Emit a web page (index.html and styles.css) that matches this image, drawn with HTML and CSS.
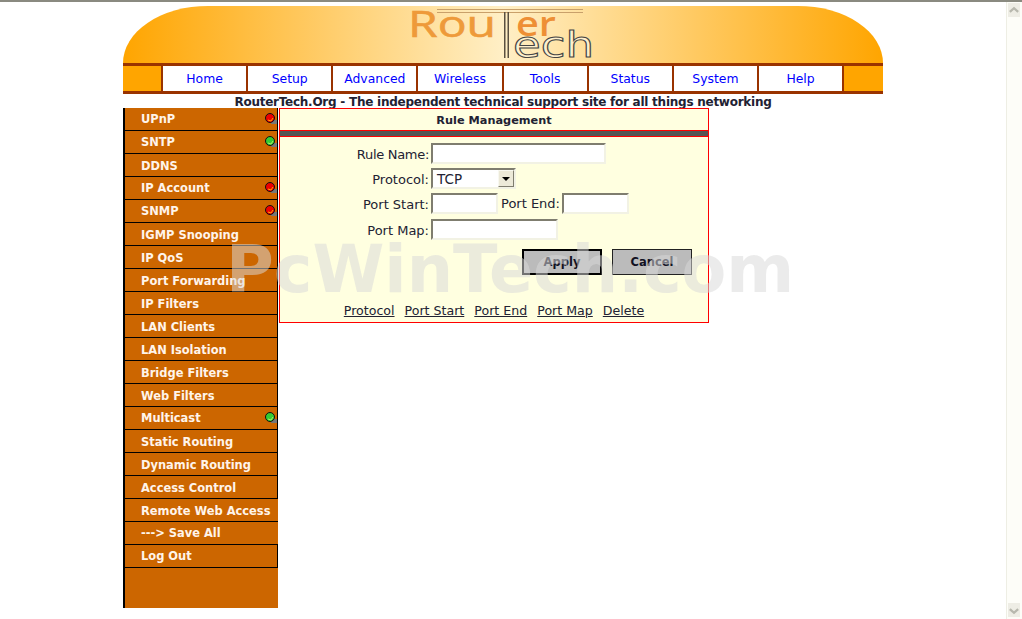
FILE: index.html
```html
<!DOCTYPE html>
<html>

<head>
    <meta name="viewport" content="width=device-width, initial-scale=1.0">
    <title>RouterTech</title>
    <link rel="stylesheet" href="styles.css">
</head>

<body>
    <div class="top-line"></div>
    <div class="page">
        <div class="content">
            <div class="banner">
                <svg class="logo" width="190" height="57" viewBox="0 0 190 57">
                    <rect x="30" y="3" width="146" height="1" fill="#c9a06a"></rect>
                    <rect x="30" y="6" width="146" height="1" fill="#c9a06a"></rect>
                    <rect x="97" y="6" width="1.5" height="46" fill="#5a5040"></rect>
                    <rect x="100.5" y="6" width="1.5" height="46" fill="#5a5040"></rect>
                    <text class="logo-rou" x="1" y="31" textLength="88" lengthAdjust="spacingAndGlyphs">Rou</text>
                    <text class="logo-er" x="109" y="30" textLength="40" lengthAdjust="spacingAndGlyphs">er</text>
                    <text class="logo-ech" x="106" y="51" textLength="81" lengthAdjust="spacingAndGlyphs">ech</text>
                </svg>
            </div>
            <div class="nav">
                <a class="nav-item" href="#">Home</a>
                <a class="nav-item" href="#">Setup</a>
                <a class="nav-item" href="#">Advanced</a>
                <a class="nav-item" href="#">Wireless</a>
                <a class="nav-item" href="#">Tools</a>
                <a class="nav-item" href="#">Status</a>
                <a class="nav-item" href="#">System</a>
                <a class="nav-item" href="#">Help</a>
                <div class="nav-end"></div>
            </div>
            <div class="tagline">RouterTech.Org - The independent technical support site for all things networking</div>
            <div class="columns">
                <div class="sidebar">
                    <a class="menu-item plain" href="#">UPnP
                        <svg class="led" width="12" height="12" viewBox="0 0 12 12"><rect x="6" y="7" width="6" height="4" fill="#777777"></rect><circle cx="5" cy="5" r="4.5" fill="#ee0000" stroke="#111111"></circle><path d="M3 7 L6 8 L8 5" stroke="#ffaa00" fill="none"></path></svg>
                    </a>
                    <a class="menu-item plain" href="#">SNTP
                        <svg class="led" width="12" height="12" viewBox="0 0 12 12"><rect x="6" y="7" width="6" height="4" fill="#777777"></rect><circle cx="5" cy="5" r="4.5" fill="#33cc33" stroke="#111111"></circle><path d="M3 7 L6 8 L8 5" stroke="#aaee66" fill="none"></path></svg>
                    </a>
                    <a class="menu-item" href="#">DDNS</a>
                    <a class="menu-item plain" href="#">IP Account
                        <svg class="led" width="12" height="12" viewBox="0 0 12 12"><rect x="6" y="7" width="6" height="4" fill="#777777"></rect><circle cx="5" cy="5" r="4.5" fill="#ee0000" stroke="#111111"></circle><path d="M3 7 L6 8 L8 5" stroke="#ffaa00" fill="none"></path></svg>
                    </a>
                    <a class="menu-item plain" href="#">SNMP
                        <svg class="led" width="12" height="12" viewBox="0 0 12 12"><rect x="6" y="7" width="6" height="4" fill="#777777"></rect><circle cx="5" cy="5" r="4.5" fill="#ee0000" stroke="#111111"></circle><path d="M3 7 L6 8 L8 5" stroke="#ffaa00" fill="none"></path></svg>
                    </a>
                    <a class="menu-item" href="#">IGMP Snooping</a>
                    <a class="menu-item" href="#">IP QoS</a>
                    <a class="menu-item" href="#">Port Forwarding</a>
                    <a class="menu-item" href="#">IP Filters</a>
                    <a class="menu-item" href="#">LAN Clients</a>
                    <a class="menu-item" href="#">LAN Isolation</a>
                    <a class="menu-item" href="#">Bridge Filters</a>
                    <a class="menu-item" href="#">Web Filters</a>
                    <a class="menu-item plain" href="#">Multicast
                        <svg class="led" width="12" height="12" viewBox="0 0 12 12"><rect x="6" y="7" width="6" height="4" fill="#777777"></rect><circle cx="5" cy="5" r="4.5" fill="#33cc33" stroke="#111111"></circle><path d="M3 7 L6 8 L8 5" stroke="#aaee66" fill="none"></path></svg>
                    </a>
                    <a class="menu-item" href="#">Static Routing</a>
                    <a class="menu-item" href="#">Dynamic Routing</a>
                    <a class="menu-item" href="#">Access Control</a>
                    <a class="menu-item open" href="#">Remote Web Access</a>
                    <a class="menu-item plain open" href="#">---&gt; Save All</a>
                    <a class="menu-item plain" href="#">Log Out</a>
                </div>
                <div class="panel">
                    <div class="panel-title">Rule Management</div>
                    <div class="panel-rule"></div>
                    <div class="form">
                        <label class="field-label name-label">Rule Name:</label>
                        <div class="field-row"><input class="text-input name-input" type="text"></div>
                        <label class="field-label">Protocol:</label>
                        <div class="field-row">
                            <div class="select-box">
                                <span class="select-value">TCP</span>
                                <span class="select-arrow"></span>
                            </div>
                        </div>
                        <label class="field-label">Port Start:</label>
                        <div class="field-row">
                            <input class="text-input port-input" type="text">
                            <label class="inline-label">Port End:</label>
                            <input class="text-input port-input" type="text">
                        </div>
                        <label class="field-label map-label">Port Map:</label>
                        <div class="field-row map-row"><input class="text-input map-input" type="text"></div>
                    </div>
                    <div class="actions">
                        <button class="btn btn-default" type="button">Apply</button>
                        <button class="btn" type="button">Cancel</button>
                    </div>
                    <div class="panel-links">
                        <a href="#">Protocol</a>
                        <a href="#">Port Start</a>
                        <a href="#">Port End</a>
                        <a href="#">Port Map</a>
                        <a href="#">Delete</a>
                    </div>
                </div>
            </div>
        </div>
        <div class="scrollbar">
            <div class="scroll-btn">
                <svg width="13" height="13" viewBox="0 0 13 13"><path d="M2 8 L6.5 4 L11 8" stroke="#b8b8ae" stroke-width="2.5" fill="none"></path></svg>
            </div>
            <div class="scroll-btn">
                <svg width="13" height="13" viewBox="0 0 13 13"><path d="M2 5 L6.5 9 L11 5" stroke="#b8b8ae" stroke-width="2.5" fill="none"></path></svg>
            </div>
        </div>
    </div>
    <div class="watermark">PcWinTech.com</div>
</body>

</html>
```

FILE: styles.css
```css
html,
body {
    margin: 0;
    height: 100%;
    overflow: hidden;
    background-color: white;
    font-family: "DejaVu Sans", Verdana, sans-serif;
}

.top-line {
    height: 2px;
    background-color: #8a8a80;
}

.page {
    display: flex;
    height: 617px;
}

.content {
    flex: 1;
    padding: 4px 0 0 123px;
}

.banner {
    width: 760px;
    height: 57px;
    display: flex;
    justify-content: center;
    background: linear-gradient(to right, #ffa500, #ffefc6 50%, #ffa500);
    border-radius: 85px 85px 0 0 / 57px 57px 0 0;
}

.logo {
    display: block;
    margin-left: -2px;
}

.logo-rou {
    font-family: "Open Sans", sans-serif;
    font-size: 36px;
    font-weight: 400;
    fill: #ee9a3a;
    stroke: #ee9a3a;
    stroke-width: 0.6;
}

.logo-er {
    font-family: "Open Sans", sans-serif;
    font-size: 34px;
    font-weight: 600;
    fill: #ee8f35;
}

.logo-ech {
    font-family: "DejaVu Sans", sans-serif;
    font-size: 36px;
    fill: #fff0cc;
    stroke: #444444;
    stroke-width: 1;
}

.nav {
    width: 760px;
    display: flex;
    padding-left: 38px;
    box-sizing: border-box;
    height: 31px;
    background-color: #ffa500;
    border-top: 3px solid #993300;
    border-bottom: 3px solid #993300;
}

.nav-item {
    width: 83.15px;
    border-left: 2px solid #993300;
    background-color: white;
    color: #0000ff;
    font-size: 12.4px;
    line-height: 25px;
    text-align: center;
    text-decoration: none;
}

.nav-end {
    width: 2px;
    background-color: #993300;
}

.tagline {
    width: 760px;
    height: 14px;
    padding-top: 1px;
    margin-bottom: -1px;
    font-size: 12px;
    font-weight: bold;
    letter-spacing: -0.25px;
    line-height: 14px;
    text-align: center;
    white-space: nowrap;
    color: #222233;
}

.columns {
    display: flex;
    align-items: flex-start;
}

.sidebar {
    width: 153px;
    height: 500px;
    border-left: 2px solid black;
    background-color: #cc6600;
    margin-right: 1px;
}

.menu-item {
    display: flex;
    align-items: center;
    justify-content: space-between;
    box-sizing: border-box;
    height: 23px;
    padding: 2px 0 0 16px;
    color: #fff4ea;
    font-size: 11.45px;
    font-weight: bold;
    text-decoration: none;
    border-bottom: 1px solid black;
    border-right: 1px solid black;
}

.menu-item.plain {
    padding-top: 0;
}

.menu-item.open {
    border-right: none;
}

.led {
    margin-top: -1px;
}

.panel {
    width: 428px;
    height: 213px;
    border: 1px solid #ff0000;
    background-color: #ffffe0;
    color: #222233;
}

.panel-title {
    height: 21px;
    font-size: 11.3px;
    font-weight: bold;
    line-height: 23px;
    text-align: center;
}

.panel-rule {
    height: 5px;
    background-color: #555555;
    border-top: 1px solid #ff0000;
    border-bottom: 1px solid #ff0000;
}

.form {
    display: grid;
    grid-template-columns: 149px auto;
    column-gap: 2px;
    row-gap: 4px;
    padding-top: 6px;
    font-size: 13px;
}

.field-label {
    text-align: right;
    line-height: 23px;
    height: 21px;
}

.name-label {
    letter-spacing: -0.3px;
}

.field-row {
    display: flex;
    align-items: center;
    height: 21px;
}

.map-label,
.map-row {
    margin-top: 1px;
}

.inline-label {
    margin: 0 2px 0 3px;
}

.text-input {
    box-sizing: border-box;
    height: 21px;
    margin: 0;
    padding: 0;
    background-color: white;
    border: 2px solid;
    border-color: #7f7d6f #f2f2e4 #f2f2e4 #7f7d6f;
}

.name-input {
    width: 175px;
}

.port-input {
    width: 67px;
}

.map-input {
    width: 127px;
}

.select-box {
    display: flex;
    box-sizing: border-box;
    width: 85px;
    height: 21px;
    background-color: white;
    border: 2px solid;
    border-color: #7f7d6f #f2f2e4 #f2f2e4 #7f7d6f;
}

.select-value {
    flex: 1;
    padding-left: 4px;
    font-size: 13.5px;
    line-height: 19px;
}

.select-arrow {
    display: flex;
    align-items: center;
    justify-content: center;
    box-sizing: border-box;
    width: 16px;
    background-color: #ece9d8;
    border: 1px solid;
    border-color: #f8f8f0 #7f7d6f #7f7d6f #f8f8f0;
}

.select-arrow::before {
    content: "";
    border-top: 4px solid black;
    border-left: 4px solid transparent;
    border-right: 4px solid transparent;
}

.actions {
    display: flex;
    justify-content: flex-end;
    gap: 10px;
    padding: 9px 16px 0 0;
}

.btn {
    box-sizing: border-box;
    width: 80px;
    height: 26px;
    margin: 0;
    padding: 0;
    background-color: #bbbbbb;
    border: 1px solid #222222;
    color: #111122;
    font-family: "DejaVu Sans", Verdana, sans-serif;
    font-size: 11.5px;
    font-weight: bold;
}

.btn-default {
    border: 2px solid black;
}

.panel-links {
    padding-top: 28px;
    font-size: 12.6px;
    text-align: center;
}

.panel-links a {
    color: #222233;
    margin: 0 3px;
}

.scrollbar {
    display: flex;
    flex-direction: column;
    justify-content: space-between;
    box-sizing: border-box;
    width: 16px;
    padding: 1px 2px 2px 1px;
    background-color: #fdfdf8;
    border-left: 1px solid #eeeee4;
}

.scroll-btn {
    display: flex;
    align-items: center;
    justify-content: center;
    height: 14px;
    background-color: #eeede5;
}

/* sits over the whole page */
.watermark {
    position: absolute;
    left: 226px;
    top: 232px;
    font-size: 65.2px;
    font-weight: bold;
    line-height: 74px;
    white-space: nowrap;
    color: rgba(216, 216, 216, 0.52);
    pointer-events: none;
}
```
